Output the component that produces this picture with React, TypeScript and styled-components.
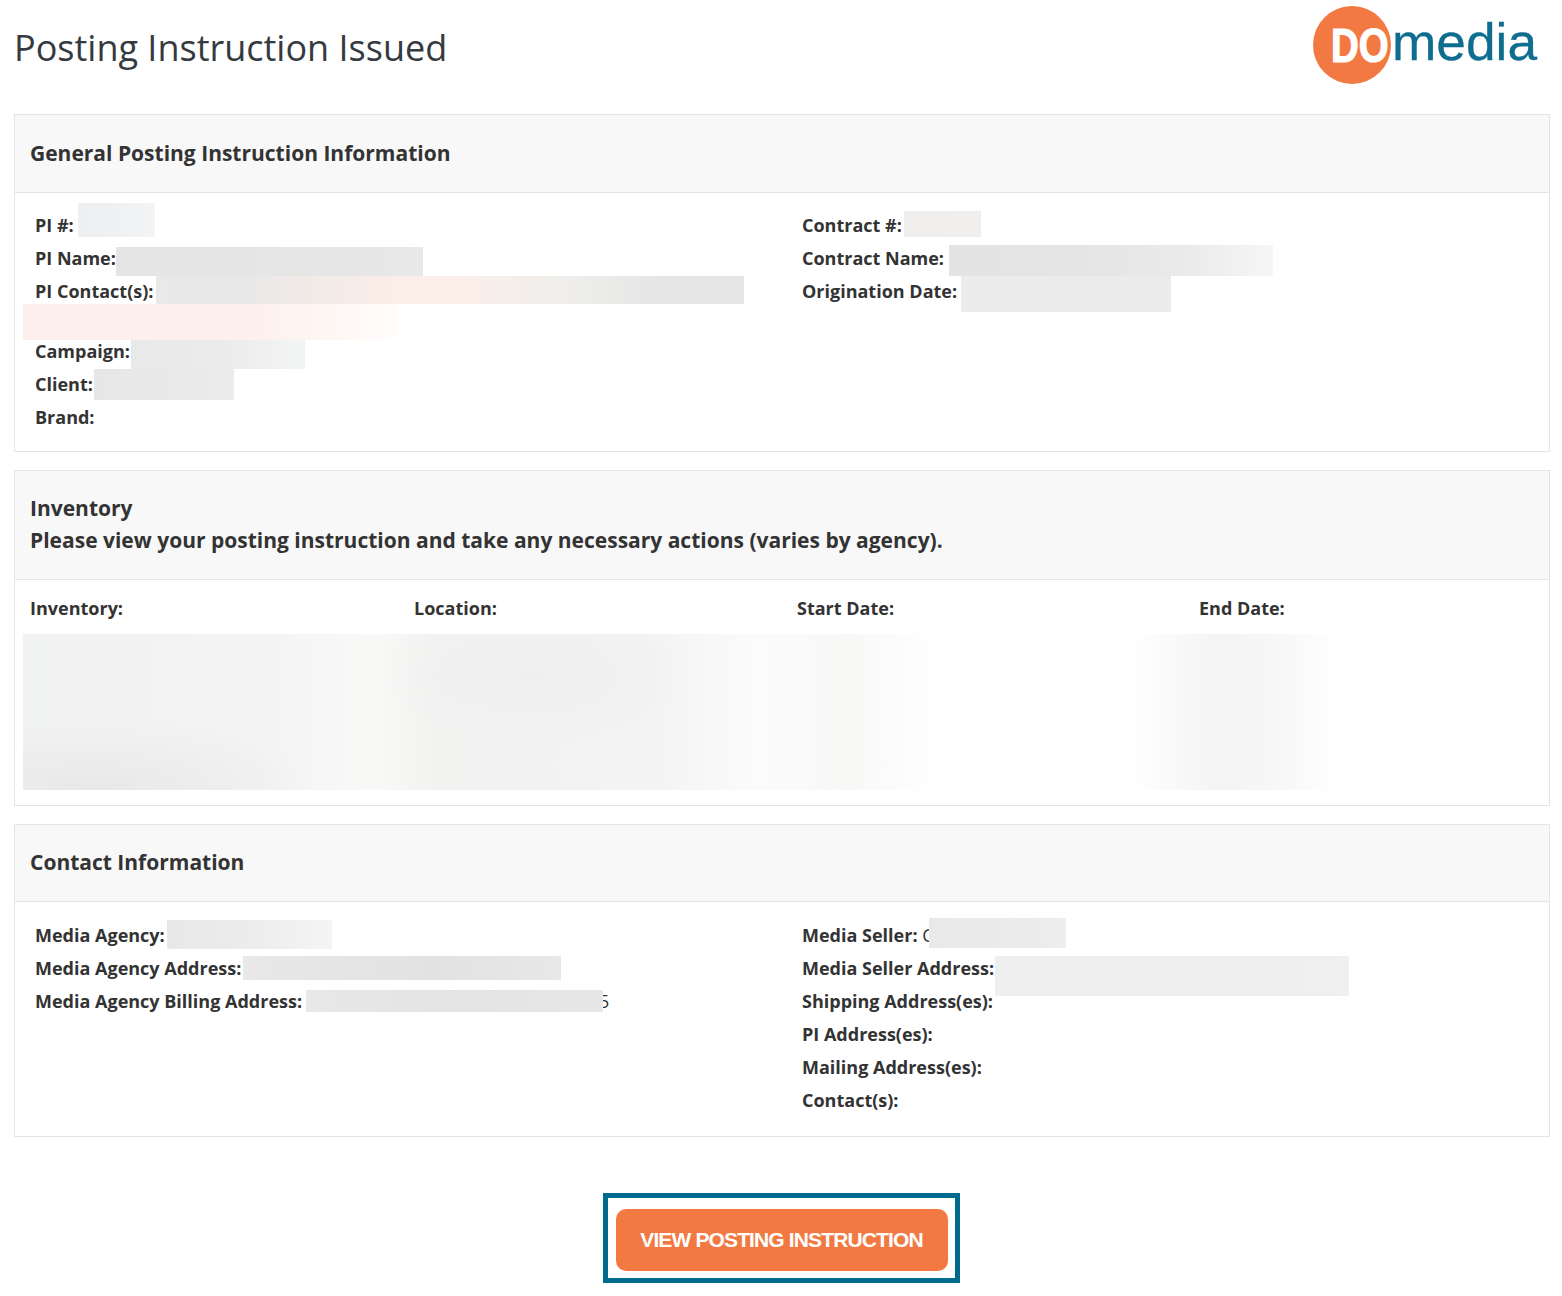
import React from "react"
import styled, { createGlobalStyle } from "styled-components"

const GlobalStyle = createGlobalStyle`
  html, body {
    margin: 0;
    padding: 0;
    background: #fff;
  }
  * {
    box-sizing: border-box;
  }
`

const blurs = [
  { x: 78, y: 203, w: 77, h: 34, bg: "linear-gradient(90deg, #eeeff0, #f0f1f2 60%, #f3f4f5)" },
  { x: 116, y: 247, w: 307, h: 29, bg: "linear-gradient(90deg, #e5e5e5, #e6e6e6 80%, #e9e9e9)" },
  { x: 156, y: 276, w: 588, h: 28, bg: "linear-gradient(90deg, #e9e9e9, #e8e8e8 14%, #fbede7 40%, #fbeee9 52%, #efeeec 70%, #e6e6e6 85%, #e6e6e6)" },
  { x: 23, y: 304, w: 374, h: 36, bg: "linear-gradient(90deg, #fdf0ec, #fdf0ec 60%, #fff9f7 90%, #fffdfc)" },
  { x: 131, y: 340, w: 174, h: 29, bg: "linear-gradient(90deg, #e9e9e9, #ebebeb 50%, #f3f4f4)" },
  { x: 94, y: 369, w: 140, h: 31, bg: "linear-gradient(90deg, #e7e7e7, #e9e9e9 60%, #ebeced)" },
  { x: 904, y: 211, w: 77, h: 26, bg: "linear-gradient(90deg, #efeeec, #f0efed)" },
  { x: 949, y: 245, w: 324, h: 31, bg: "linear-gradient(90deg, #e3e3e3, #e6e6e6 50%, #ebebeb 75%, #f6f6f6)" },
  { x: 961, y: 276, w: 210, h: 36, bg: "linear-gradient(90deg, #ececec, #ebebec)" },
  {
    x: 23,
    y: 634,
    w: 917,
    h: 156,
    bg: "radial-gradient(ellipse 230px 70px at 70px 156px, #e8e8e8, rgba(232, 232, 232, 0)), radial-gradient(ellipse 160px 70px at 510px 40px, #efefef, rgba(239, 239, 239, 0)), linear-gradient(90deg, #f1f2f2, #f3f3f3 25%, #f9f9f8 38%, #f2f2f1 45%, #f3f3f3 68%, #fbfbfb 80%, #f8f8f7 90%, #ffffff)",
  },
  { x: 1130, y: 634, w: 210, h: 156, bg: "linear-gradient(90deg, #ffffff, #f8f8f8 25%, #f4f4f4 40%, #f6f6f6 65%, #ffffff)" },
  { x: 167, y: 920, w: 165, h: 29, bg: "linear-gradient(90deg, #e8e8e8, #ececec 50%, #f5f5f5)" },
  { x: 243, y: 956, w: 318, h: 24, bg: "linear-gradient(90deg, #e8e8e8, #e2e2e2 60%, #e8e8e8)" },
  { x: 306, y: 990, w: 297, h: 22, bg: "linear-gradient(90deg, #e8e8e8, #e4e4e4 50%, #e7e7e7)" },
  { x: 929, y: 918, w: 137, h: 30, bg: "linear-gradient(90deg, #e9e9e9, #ebebeb 70%, #eeeeee)" },
  { x: 995, y: 956, w: 354, h: 40, bg: "linear-gradient(90deg, #efefef, #eeeeee 60%, #f0f0f0)" },
]

export default function App () {
  return (
    <Page>
      <GlobalStyle />
      <Header>
        <Title>Posting Instruction Issued</Title>
        <Logo />
      </Header>

      <Panel>
        <PanelHeader $height={78} $lift={1}>General Posting Instruction Information</PanelHeader>
        <TwoColumns $top={16} $bottom={17}>
          <Column>
            <Field>PI #:</Field>
            <Field>PI Name:</Field>
            <Field>PI Contact(s):</Field>
            <BlankLine />
            <Field>Campaign:</Field>
            <Field>Client:</Field>
            <Field>Brand:</Field>
          </Column>
          <Column>
            <Field>Contract #:</Field>
            <Field>Contract Name:</Field>
            <Field>Origination Date:</Field>
          </Column>
        </TwoColumns>
      </Panel>

      <Panel>
        <TallPanelHeader>
          Inventory
          <br />
          Please view your posting instruction and take any necessary actions (varies by agency).
        </TallPanelHeader>
        <InventoryGrid>
          <span>Inventory:</span>
          <span>Location:</span>
          <span>Start Date:</span>
          <span>End Date:</span>
        </InventoryGrid>
        <InventoryRows />
      </Panel>

      <Panel>
        <PanelHeader $height={77} $lift={3}>Contact Information</PanelHeader>
        <TwoColumns $top={17} $bottom={19}>
          <Column>
            <Field>Media Agency:</Field>
            <Field>Media Agency Address:</Field>
            <Field>
              Media Agency Billing Address:<HiddenTail>5</HiddenTail>
            </Field>
          </Column>
          <Column>
            <Field>
              Media Seller: <PartialValue>C</PartialValue>
            </Field>
            <Field>Media Seller Address:</Field>
            <Field>Shipping Address(es):</Field>
            <Field>PI Address(es):</Field>
            <Field>Mailing Address(es):</Field>
            <Field>Contact(s):</Field>
          </Column>
        </TwoColumns>
      </Panel>

      <ButtonFrame>
        <ViewButton>VIEW POSTING INSTRUCTION</ViewButton>
      </ButtonFrame>

      {blurs.map(b => (
        <Blur key={`${b.x}-${b.y}`} $x={b.x} $y={b.y} $w={b.w} $h={b.h} $bg={b.bg} />
      ))}
    </Page>
  )
}

function Logo () {
  return (
    <LogoSvg viewBox="0 0 232 90" width="232" height="90">
      <circle cx="42" cy="45" r="39" fill="#f27a42" />
      <text
        transform="translate(21 62) scale(0.8 1)"
        fill="#fff"
        stroke="#fff"
        strokeWidth="1.2"
        fontFamily="'Liberation Sans', Arial, sans-serif"
        fontWeight="700"
        fontSize="48"
      >
        DO
      </text>
      <text
        x="82"
        y="60"
        fill="#0f6d8f"
        stroke="#0f6d8f"
        strokeWidth="0.3"
        fontFamily="'Liberation Sans', Arial, sans-serif"
        fontSize="52"
        textLength="145"
        lengthAdjust="spacingAndGlyphs"
      >
        media
      </text>
    </LogoSvg>
  )
}

const Page = styled.div`
  position: relative;
  width: 1562px;
  height: 1296px;
  padding: 0 12px 0 14px;
  overflow: hidden;
  font-family: "Open Sans", "Liberation Sans", sans-serif;
  color: #333;
`

const Header = styled.header`
  display: flex;
  justify-content: space-between;
  align-items: flex-start;
  height: 114px;
`

const Title = styled.h1`
  margin: 24px 0 0 0;
  font-size: 36px;
  line-height: 48px;
  font-weight: 400;
  color: #343a40;
`

const LogoSvg = styled.svg`
  display: block;
  margin-right: 8px;
`

const Panel = styled.section`
  border: 1px solid #e5e5e5;
  margin-bottom: 18px;
`

const PanelHeader = styled.h2<{ $height: number; $lift: number }>`
  margin: 0;
  height: ${p => p.$height}px;
  padding: 0 15px ${p => p.$lift}px;
  display: flex;
  align-items: center;
  background: #f8f8f8;
  border-bottom: 1px solid #e5e5e5;
  font-size: 21px;
  font-weight: 700;
  color: #333;
`

const TallPanelHeader = styled.h2`
  margin: 0;
  height: 109px;
  padding: 21px 15px 0;
  background: #f8f8f8;
  border-bottom: 1px solid #e5e5e5;
  font-size: 21px;
  line-height: 32px;
  font-weight: 700;
  color: #333;
`

const TwoColumns = styled.div<{ $top: number; $bottom: number }>`
  display: grid;
  grid-template-columns: 767px 1fr;
  padding: ${p => p.$top}px 20px ${p => p.$bottom}px;
`

const Column = styled.div`
  display: flex;
  flex-direction: column;
`

const Field = styled.div`
  height: 33px;
  line-height: 33px;
  font-size: 18px;
  font-weight: 700;
  white-space: nowrap;
`

const BlankLine = styled.div`
  height: 27px;
`

const HiddenTail = styled.span`
  margin-left: 297px;
  font-weight: 400;
`

const PartialValue = styled.span`
  font-weight: 400;
`

const InventoryGrid = styled.div`
  display: grid;
  grid-template-columns: 384px 383px 402px 1fr;
  height: 54px;
  padding: 12px 15px 0;
  font-size: 18px;
  line-height: 33px;
  font-weight: 700;
`

const InventoryRows = styled.div`
  height: 171px;
`

const ButtonFrame = styled.div`
  width: 357px;
  height: 90px;
  margin: 56px auto 0;
  padding: 11px 7px 7px 8px;
  border: 5px solid #006a8e;
  transform: translateX(-1px);
`

const ViewButton = styled.button`
  display: block;
  width: 332px;
  height: 62px;
  padding: 0;
  border: 0;
  border-radius: 10px;
  background: #f27a42;
  color: #fff;
  font-family: "Liberation Sans", Arial, sans-serif;
  font-size: 21px;
  font-weight: 700;
  letter-spacing: -0.87px;
  white-space: nowrap;
`

const Blur = styled.div<{ $x: number; $y: number; $w: number; $h: number; $bg: string }>`
  position: absolute;
  left: ${p => p.$x}px;
  top: ${p => p.$y}px;
  width: ${p => p.$w}px;
  height: ${p => p.$h}px;
  background: ${p => p.$bg};
`
